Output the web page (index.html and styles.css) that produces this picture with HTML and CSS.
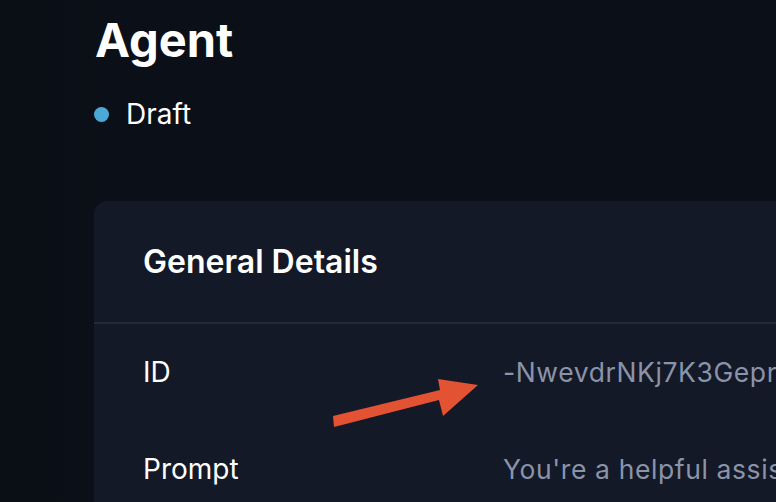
FILE: index.html
```html
<!DOCTYPE html>
<html lang="en">
<head>
<meta charset="utf-8">
<title>Agent</title>
<link rel="stylesheet" href="styles.css">
</head>
<body>
<div class="page">
  <main class="main">
    <h1 class="title">Agent</h1>
    <div class="status"><span class="dot"></span><span class="status-text">Draft</span></div>
    <section class="card">
      <header class="card-head">General Details</header>
      <div class="rows">
        <div class="row">
          <div class="label">ID</div>
          <div class="value">-NwevdrNKj7K3GeprZqLmXa</div>
        </div>
        <div class="row">
          <div class="label">Prompt</div>
          <div class="value">You're a helpful assistant that answers questions.</div>
        </div>
      </div>
      <svg class="arrow" width="160" height="60" viewBox="0 0 160 60" aria-hidden="true">
        <polygon points="2,37 3,48 108,21 112,37 147,6 107,0 109,11" fill="#e35333"/>
      </svg>
    </section>
  </main>
</div>
</body>
</html>
```

FILE: styles.css
```css
* { box-sizing: border-box; }
html, body {
  margin: 0;
  padding: 0;
  width: 776px;
  height: 502px;
  overflow: hidden;
  background: #0b0f17;
  font-family: Inter, "Noto Sans", sans-serif;
}
.page {
  height: 502px;
  padding-left: 94px;
  background: linear-gradient(90deg, #0a0e15 0px, #0b0f17 94px);
}
.main {
  padding-top: 12px;
}
.title {
  margin: 0;
  padding-left: 1px;
  font-size: 47px;
  line-height: 56px;
  font-weight: 700;
  color: #ffffff;
  letter-spacing: 0;
}
.status {
  display: flex;
  align-items: center;
  gap: 17px;
  margin-top: 30px;
  height: 32px;
}
.dot {
  width: 15px;
  height: 15px;
  border-radius: 50%;
  background: #4ba9d6;
  flex-shrink: 0;
}
.status-text {
  font-size: 28px;
  color: #ffffff;
  font-weight: 400;
}
.card {
  position: relative;
  margin-top: 71px;
  background: #131927;
  border-radius: 14px 0 0 0;
  height: 320px;
  overflow: hidden;
}
.card-head {
  height: 123px;
  padding-left: 49px;
  display: flex;
  align-items: center;
  font-size: 32px;
  font-weight: 600;
  color: #ffffff;
  border-bottom: 2px solid #222a37;
}
.rows {
  padding-top: 23px;
}
.row {
  display: flex;
  align-items: center;
  height: 50px;
  margin-bottom: 47px;
  white-space: nowrap;
}
.label {
  flex: 0 0 409px;
  padding-left: 49px;
  font-size: 28px;
  color: #ffffff;
}
.value {
  font-size: 26.5px;
  color: #8b93a9;
  letter-spacing: 0.6px;
}
.arrow {
  position: absolute;
  left: 237px;
  top: 178px;
}
```
